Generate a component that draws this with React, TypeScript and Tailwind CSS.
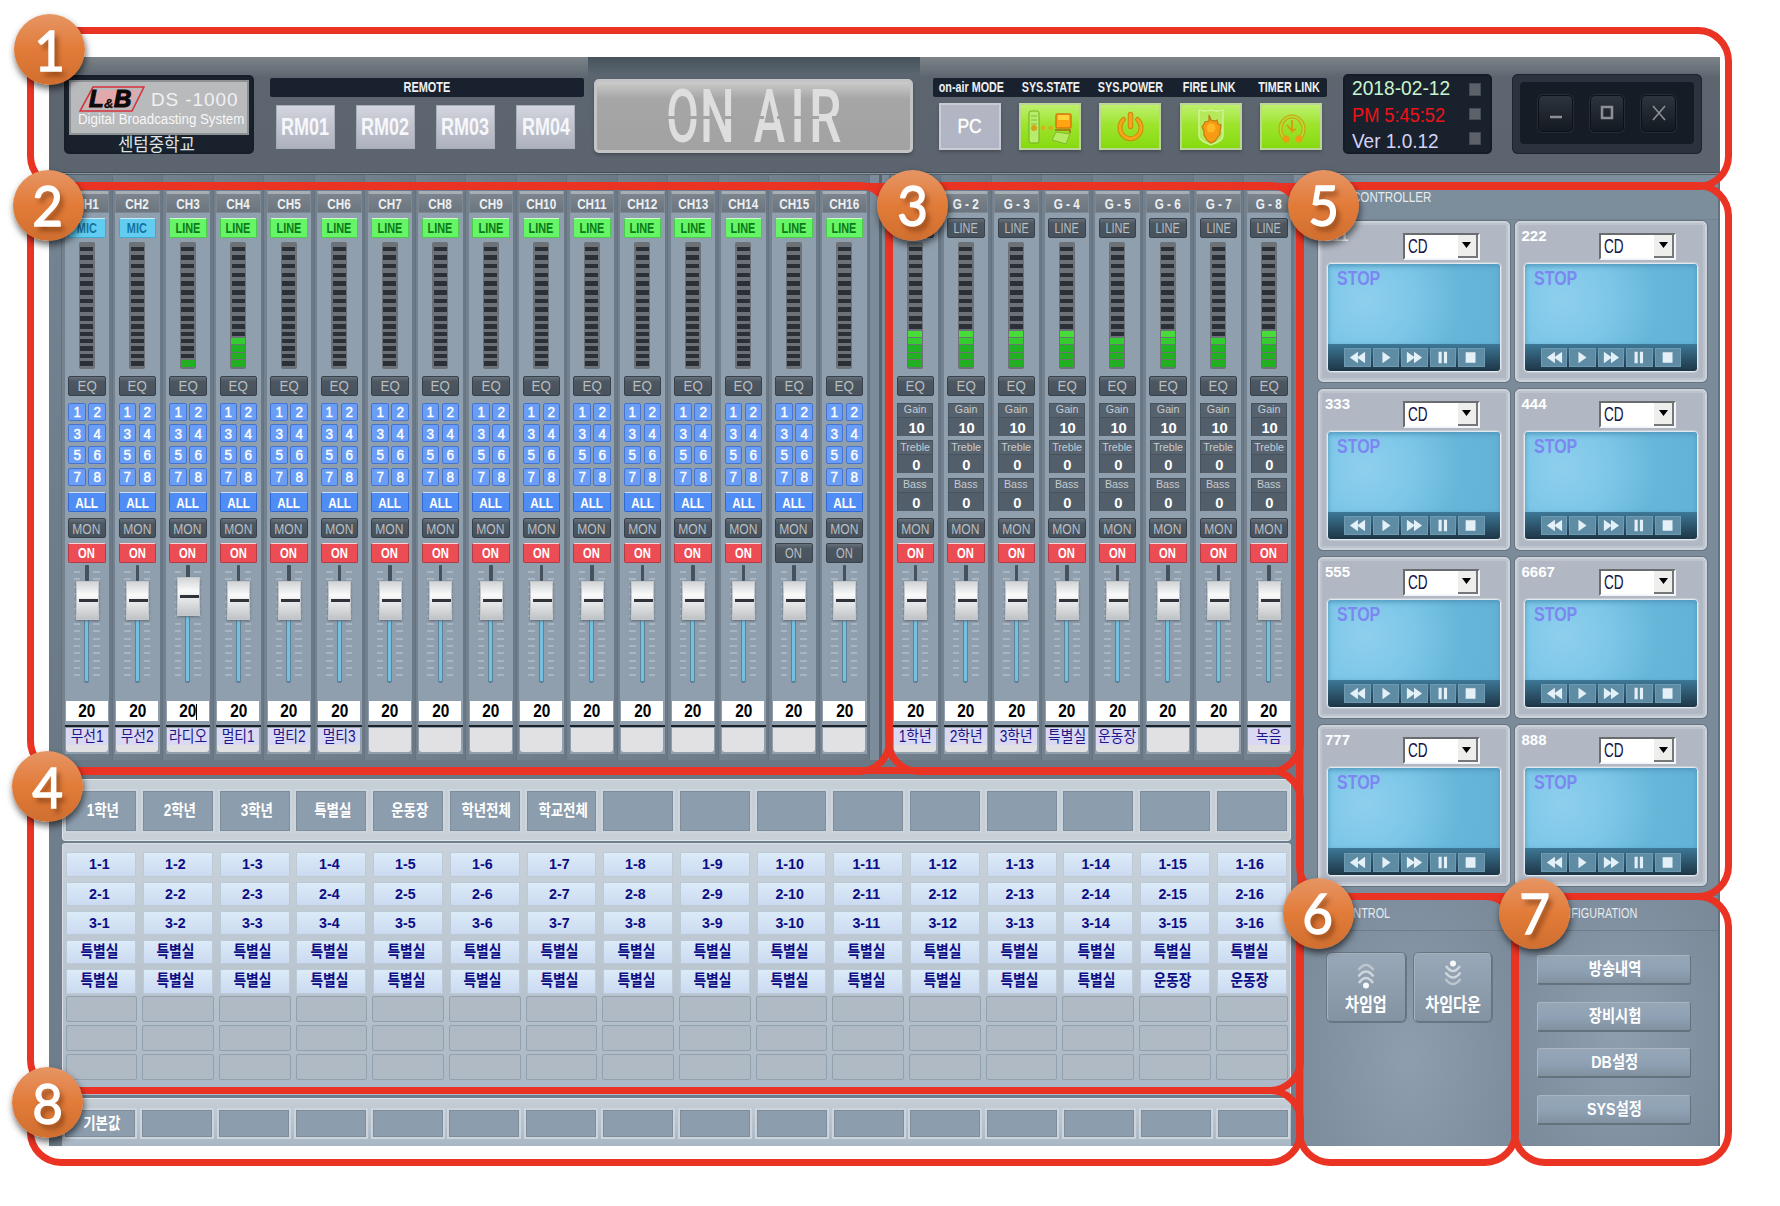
import React from "react";

const times = (n: number) => Array.from({ length: n }, (_, i) => i);

function T({ children, className = "" }: { children: React.ReactNode; className?: string }) {
  return <span className={`block whitespace-nowrap leading-none ${className}`}>{children}</span>;
}

/* ---------- header ---------- */

function Logo() {
  return (
    <div className="mt-[18px] ml-[15px] h-[79px] w-[190px] shrink-0 rounded-[5px] border-2 border-[#161e28] bg-[#18212c] px-[3px] pt-[3px]">
      <div className="h-[55px] border-2 border-[#8e9194] bg-[#b9babc] px-[8px] pt-[4px]">
        <div className="flex items-center">
          <svg width="66" height="26" viewBox="0 0 66 26">
            <polygon points="14,1 65,1 53,25 1,25" fill="#b9babc" stroke="#d8323c" strokeWidth="1.6" />
            <polygon points="16,4 60,4 50,22 6,22" fill="#e2a9ad" />
            <g fontFamily="Liberation Sans" fontWeight="bold" fontStyle="italic" fill="#0b0b0b" stroke="#0b0b0b">
              <text x="10" y="21" fontSize="24" strokeWidth="1.2" textLength="17">L</text>
              <text x="25" y="22" fontSize="13" strokeWidth="0.3">&amp;</text>
              <text x="35" y="21" fontSize="24" strokeWidth="1.2" textLength="19">B</text>
            </g>
          </svg>
          <T className="ml-[6px] text-[19px] tracking-[0.9px] text-[#f0f1f3]">DS -1000</T>
        </div>
        <T className="-ml-[1px] origin-left scale-x-[.95] text-[14px] text-[#f6f7f8]">Digital Broadcasting System</T>
      </div>
      <div className="flex h-[19px] items-center justify-center pr-[5px]">
        <T className="scale-x-[.93] text-[18px] text-[#dfe3e6]">센텀중학교</T>
      </div>
    </div>
  );
}

function Remote() {
  return (
    <div className="mt-[21px] ml-[16px] w-[314px] shrink-0">
      <div className="flex h-[19px] items-center justify-center rounded-[2px] bg-[#18212d] pb-[2px]">
        <T className="scale-x-[.78] text-[14px] font-bold text-[#eef0f2]">REMOTE</T>
      </div>
      <div className="mt-[8px] ml-[5.5px] flex gap-[21.2px]">
        {["RM01", "RM02", "RM03", "RM04"].map((r) => (
          <div key={r} className="flex h-[44px] w-[59px] shrink-0 items-center justify-center border border-[#a9adb8] bg-linear-to-b from-[#d3d5de] via-[#bfc2cd] to-[#adb1be] pb-px">
            <T className="scale-x-[.75] text-[24px] font-bold text-[#f6f7fa]">{r}</T>
          </div>
        ))}
      </div>
    </div>
  );
}

function LedLetter({ ch, w, scale, single }: { ch: string; w: string; scale: string; single?: boolean }) {
  return (
    <span className={`relative flex justify-center ${w}`}>
      <span className={`block text-[74px] leading-none font-medium ${scale}`}>{ch}</span>
      {single ? (
        <i className="absolute top-[36px] left-[2px] h-[3px] w-[10px] bg-[#a4a4a4]" />
      ) : (
        <>
          <i className="absolute top-[36px] -left-[2px] h-[3px] w-[10px] bg-[#a4a4a4]" />
          <i className="absolute top-[36px] -right-[2px] h-[3px] w-[10px] bg-[#a4a4a4]" />
        </>
      )}
    </span>
  );
}

function OnAir() {
  return (
    <div className="ml-[4px] h-[114px] w-[332px] shrink-0 bg-linear-to-b from-[#46525c] via-[#5a6570] via-15% to-[#5c646f]">
      <div className="mt-[22px] ml-[6px] flex h-[74px] w-[319px] items-center justify-center rounded-[5px] border-[3px] border-[#c2c4c6] bg-linear-to-b from-[#cbcbca] from-0% via-[#a6a6a6] via-25% to-[#a2a2a2] shadow-[0_2px_3px_#454c55]">
        <div className="flex items-center gap-[6px] pt-[2px] text-[#dedede]" style={{ fontFamily: "Roboto" }}>
          <LedLetter ch="O" w="w-[29px]" scale="scale-x-[.64]" />
          <LedLetter ch="N" w="w-[29px]" scale="scale-x-[.66]" />
          <span className="w-[12px]" />
          <LedLetter ch="A" w="w-[29px]" scale="scale-x-[.64]" />
          <LedLetter ch="I" w="w-[14px]" scale="scale-x-[.7]" single />
          <LedLetter ch="R" w="w-[29px]" scale="scale-x-[.7]" />
        </div>
      </div>
    </div>
  );
}

function StateIcon() {
  return (
    <svg width="58" height="44" viewBox="0 0 58 44">
      <rect x="8" y="6" width="10" height="32" rx="2" fill="#b9ec6c" stroke="#6fae20" />
      <path d="M10 11h6M10 15h6M10 19h6" stroke="#7fbf2a" />
      <circle cx="13" cy="23" r="3" fill="#d6a21c" />
      <circle cx="22" cy="23" r="2.200" fill="#d9b01c" />
      <circle cx="29.500" cy="23" r="2.200" fill="#d9b01c" />
      <rect x="35" y="9" width="15" height="14" rx="1.5" fill="#ffa313" stroke="#d67a0c" strokeWidth="1.5" />
      <rect x="37" y="10" width="11" height="5" fill="#ffd23c" />
      <path d="M35 27l14 2-4 10-14-4z" fill="#b6ea62" stroke="#7fb82c" />
      <path d="M34 25h15v3" stroke="#a56a10" strokeWidth="1.5" fill="none" />
    </svg>
  );
}
function PowerIcon() {
  return (
    <svg width="58" height="44" viewBox="0 0 58 44" fill="none" strokeLinecap="round">
      <path d="M22.500 14.500a10.500 11 0 1 0 14 0" stroke="#c98a0e" strokeWidth="5" />
      <path d="M29.500 9.500v12" stroke="#c98a0e" strokeWidth="5.500" />
      <path d="M22.500 14.500a10.500 11 0 1 0 14 0" stroke="#f3a616" strokeWidth="3" />
      <path d="M29.500 9.500v12" stroke="#f8a41b" strokeWidth="3.500" />
    </svg>
  );
}
function FireIcon() {
  return (
    <svg width="58" height="44" viewBox="0 0 58 44">
      <path d="M17 5q6 2 12 0 6 2 12 0v26q0 5-12 9-12-4-12-9z" fill="#b4e95e" stroke="#d3f59a" strokeWidth="1.3" />
      <path d="M27 10l2 5 4 1 2-1 1 4 3 1-1 6 0 3-2 3-3 4-4 2-4-3-3-5 0-4-2-4 2-3 1-2 4-1z" fill="#f99a13" stroke="#c07b0e" strokeWidth="1.200" />
      <circle cx="29" cy="23" r="4.500" fill="#ffb727" />
    </svg>
  );
}
function TimerIcon() {
  return (
    <svg width="58" height="44" viewBox="0 0 58 44" fill="none">
      <path d="M23 34a11.500 12.500 0 1 1 14 0" stroke="#cc9d12" strokeWidth="4" />
      <path d="M23 34a11.500 12.500 0 1 1 14 0" stroke="#b6dc2e" strokeWidth="2" />
      <circle cx="24" cy="34" r="3.500" fill="#eb9d14" />
      <circle cx="37" cy="34" r="3.500" fill="#eb9d14" />
      <path d="M30 15v11l-5-6M30 26l4-2" stroke="#d9980f" strokeWidth="1.800" />
    </svg>
  );
}

function Status() {
  const items: [string, React.ReactNode][] = [
    ["on-air MODE", null],
    ["SYS.STATE", <StateIcon key="s" />],
    ["SYS.POWER", <PowerIcon key="p" />],
    ["FIRE LINK", <FireIcon key="f" />],
    ["TIMER LINK", <TimerIcon key="t" />],
  ];
  return (
    <div className="mt-[21px] ml-[13px] w-[394px] shrink-0">
      <div className="flex h-[19px] rounded-[2px] bg-[#18212d] pb-[2px]">
        {items.map(([l]) => (
          <div key={l} className="-mr-[0.5px] flex w-[80px] shrink-0 items-center justify-center pr-[4px]">
            <T className="scale-x-[.77] text-[14px] font-bold text-[#eef0f2]">{l}</T>
          </div>
        ))}
      </div>
      <div className="mt-[6px] ml-[6px] flex gap-[18.200px]">
        {items.map(([l, icon]) =>
          icon ? (
            <div key={l} className="flex h-[47px] w-[62px] shrink-0 items-center justify-center border-2 border-[#bcd59a] bg-linear-to-b from-[#bdf06a] via-[#9fe42c] via-45% to-[#86da0c] shadow-[0_2px_3px_#454c55]">
              {icon}
            </div>
          ) : (
            <div key={l} className="flex h-[47px] w-[62px] shrink-0 items-center justify-center border-2 border-[#c9ccd3] bg-linear-to-b from-[#b3b6c2] to-[#b0b5c6] pb-[2px] shadow-[0_2px_3px_#454c55]">
              <T className="scale-x-[.83] text-[21px] text-white [-webkit-text-stroke:0.4px_white]">PC</T>
            </div>
          ),
        )}
      </div>
    </div>
  );
}

function Clock() {
  return (
    <div className="mt-[17px] ml-[16px] flex h-[80px] w-[149px] shrink-0 justify-between rounded-[5px] border-2 border-[#141c26] bg-[#19212c] pt-[2px] pr-[9px] pl-[7px]">
      <div className="flex flex-col gap-[6.500px] text-[20px]">
        <T className="origin-left scale-x-[.96] text-[#c9f5cf]">2018-02-12</T>
        <T className="origin-left scale-x-[.91] text-[#ee1318]">PM 5:45:52</T>
        <T className="origin-left scale-x-[.95] text-[#d4d2f8]">Ver 1.0.12</T>
      </div>
      <div className="flex flex-col gap-[12px] pt-[5px]">
        {times(3).map((i) => (
          <div key={i} className="h-[12.500px] w-[12px] border border-[#444b54] bg-[#5d626a]" />
        ))}
      </div>
    </div>
  );
}

function WindowControls() {
  const icons = [
    <path key="a" d="M4 14h12" />,
    <rect key="b" x="5" y="4" width="10" height="11" />,
    <path key="c" d="M4 3l12 14M16 3L4 17" strokeWidth="1.600" />,
  ];
  return (
    <div className="mt-[17px] ml-[20px] h-[80px] w-[190px] shrink-0 rounded-[6px] bg-[#2b333e] p-[8px] shadow-[inset_0_0_0_1px_#1c242e]">
      <div className="flex h-[62px] items-center justify-center gap-[17px] rounded-[4px] bg-[#151c25]">
        {icons.map((ic, i) => (
          <div key={i} className="flex h-[37px] w-[34.500px] items-center justify-center rounded-[5px] border border-[#0c1118] bg-linear-to-b from-[#2c343d] to-[#141a21] shadow-[0_0_0_1px_#252d37]">
            <svg width="20" height="20" viewBox="0 0 20 20" fill="none" stroke="#8d9094" strokeWidth="2.500">{ic}</svg>
          </div>
        ))}
      </div>
    </div>
  );
}

/* ---------- mixer ---------- */

function Key({ children, tone }: { children: React.ReactNode; tone: string }) {
  return (
    <div className={`mx-auto flex h-[20px] w-[37.500px] items-center justify-center overflow-hidden rounded-[2px] border ${tone}`}>
      {children}
    </div>
  );
}
const DARK = "border-[#39424c] bg-linear-to-b from-[#67717c] via-[#4d5761] via-25% to-[#48525c] text-[#b9bec3]";
const GREEN = "border-[#4cc84c] border-t-[#d3fbd0] bg-[#66f566] text-[#0c7a1a]";
const CYAN = "border-[#3fa8d0] border-t-[#c5eefa] bg-[#62cdf0] text-[#1474a0]";
const RED = "border-[#b03c46] border-t-[#fbd0d2] bg-[#ec4c54] text-white";
const BLUE = "border-[#2f68d0] border-t-[#cfe0ff] bg-[#4f8df4] text-white";
const LIT = ["bg-[#22b022]", "bg-[#22b022]", "bg-[#20b424]", "bg-[#35cc30]", "bg-[#48dc3a]"];

function Meter({ level }: { level: number }) {
  return (
    <div className="mx-auto h-[127px] w-[16px] rounded-[2px] bg-[#6c7277] pt-[3px]">
      {times(15).map((i) => {
        const fromBottom = 14 - i;
        const lit = fromBottom < level;
        return (
          <div key={i} className={`flex items-center justify-center ${i < 9 ? "h-[8.700px]" : "h-[7.400px]"}`}>
            <div className={lit ? `h-[6.500px] w-[14px] ${LIT[Math.min(4, fromBottom)]}` : "h-[4.500px] w-[13px] bg-[#2b3036]"} />
          </div>
        );
      })}
    </div>
  );
}

function Fader({ raised }: { raised?: boolean }) {
  return (
    <div className="relative mx-auto h-[122px] w-[26px]">
      <div className="mx-auto h-[16px] w-[3.500px] rounded-[1px] bg-[#45525e]" />
      <div className="mx-auto h-[102px] w-[5px] rounded-b-[2px] border-x border-b-2 border-[#5d8197] bg-[#74c0e0]" />
      <div className="absolute inset-x-0 top-[6px] flex flex-col gap-[5.400px]">
        {times(15).map((i) => (
          <div key={i} className="flex justify-between">
            <i className="h-[2px] w-[6.500px] bg-[#a9b6c1]" />
            <i className="h-[2px] w-[6.500px] bg-[#a9b6c1]" />
          </div>
        ))}
      </div>
      <div className={`absolute left-[2px] flex h-[39px] w-[23px] items-center justify-end border border-[#c4c7ca] bg-linear-to-b from-[#d2d4d6] via-[#fafafa] via-35% to-[#c0c3c6] shadow-[0_1px_2px_#5d6a76] ${raised ? "top-[12px]" : "top-[16px]"}`}>
        <i className="h-[2.500px] w-[19px] bg-[#30343a]" />
      </div>
    </div>
  );
}

function Param({ name, value }: { name: string; value: string }) {
  return (
    <div className="mx-auto h-[33px] w-[36px] border border-[#46525d] bg-[#56626e]">
      <div className="flex h-[14px] items-center justify-center border-b border-[#46525d]">
        <T className="scale-x-[.93] text-[11.500px] text-[#c6ccd1]">{name}</T>
      </div>
      <div className="flex h-[18px] items-center justify-center bg-[#525e6a] pt-[2px] pl-[2px]">
        <T className="scale-x-[.95] text-[15.500px] font-bold text-white">{value}</T>
      </div>
    </div>
  );
}

interface StripProps {
  title: string;
  source: string;
  tone: string;
  level: number;
  on: boolean;
  label: string;
  group?: boolean;
  active?: boolean;
}

function Strip({ title, source, tone, level, on, label, group, active }: StripProps) {
  const bold = tone === DARK ? "" : "font-semibold";
  return (
    <div className="h-[585px] w-[50.500px] shrink-0 border-l border-[#647281] bg-linear-to-r from-[#74828f] to-[#6b7987] pt-[16px] text-[14px]">
      <div className="mx-auto h-[563px] w-[44.500px] bg-[#8f9fae]">
        <div className="flex h-[22px] items-center justify-center rounded-t-[3px] border border-t-[3px] border-[#7f8890] border-t-[#a7aeb4] bg-linear-to-b from-[#7c858d] to-[#6b757f]">
          <T className="scale-x-[.78] text-[15px] font-bold text-[#eceff1]">{title}</T>
        </div>
        <div className="h-[4.500px]" />
        <Key tone={tone}><T className={`scale-x-[.78] ${bold}`}>{source}</T></Key>
        <div className="h-[4px]" />
        <Meter level={level} />
        <div className="h-[7px]" />
        <Key tone={DARK}><T className="scale-x-[.95]">EQ</T></Key>
        <div className="h-[7px]" />
        <div className="h-[89.500px]">
          {group ? (
            <div className="flex h-[108px] flex-col gap-[4.500px]">
              <Param name="Gain" value="10" />
              <Param name="Treble" value="0" />
              <Param name="Bass" value="0" />
            </div>
          ) : (
            <div className="mx-auto grid w-[37.500px] grid-cols-2 gap-x-[2.500px] gap-y-[3.700px]">
              {times(8).map((n) => (
                <div key={n} className="flex h-[18px] items-center justify-center rounded-[2px] border border-[#4474cf] bg-[#6a9df5]">
                  <T className="scale-x-90 text-[15px] text-white [-webkit-text-stroke:0.4px_white]">{n + 1}</T>
                </div>
              ))}
            </div>
          )}
        </div>
        <div className="h-[20px]">{!group && <Key tone={BLUE}><T className="scale-x-[.84] pt-px font-semibold">ALL</T></Key>}</div>
        <div className="h-[6px]" />
        <Key tone={DARK}><T className="scale-x-[.86] pt-px">MON</T></Key>
        <div className="h-[4.500px]" />
        <Key tone={on ? RED : DARK}><T className={`scale-x-[.8] ${on ? "font-bold" : ""}`}>ON</T></Key>
        <div className="h-[2.500px]" />
        <Fader raised={active} />
        <div className="h-[13.500px]" />
        <div className="mx-auto flex h-[20px] w-[42px] items-center justify-center bg-white pt-[2px]">
          <T className="scale-x-[.88] text-[17.500px] font-bold text-black">20</T>
          {active && <i className="-ml-px h-[16px] w-px bg-black" />}
        </div>
        <div className="h-[4px]" />
        <div className="h-[2.500px] bg-[#1b2129]" />
        <div className="mx-auto mt-px h-[24px] w-[42px] rounded-b-[3px] bg-[#e1e1e3]">
          {label && (
            <div className="flex h-[17px] items-center justify-center bg-[#dad9f3] pt-px">
              <T className="scale-x-[.86] text-[16px] text-[#1d1487]">{label}</T>
            </div>
          )}
        </div>
      </div>
    </div>
  );
}

function Mixer() {
  const chLabels = ["무선1", "무선2", "라디오", "멀티1", "멀티2", "멀티3"];
  const chLevels: Record<number, number> = { 2: 1, 3: 4 };
  const gLabels = ["1학년", "2학년", "3학년", "특별실", "운동장", "", "", "녹음"];
  const gLevels = [5, 5, 5, 5, 4, 5, 4, 5];
  return (
    <div className="flex h-[604px] bg-linear-to-b from-[#7f909f] via-[#748492] via-3% to-[#6a7885] pl-[12px]">
      {times(16).map((i) => (
        <Strip
          key={i}
          title={`CH${i + 1}`}
          source={i < 2 ? "MIC" : "LINE"}
          tone={i < 2 ? CYAN : GREEN}
          level={chLevels[i] ?? 0}
          on={i < 14}
          label={chLabels[i] ?? ""}
          active={i === 2}
        />
      ))}
      <div className="flex h-[585px] w-[20.500px] shrink-0 border-x border-[#647281] bg-[#7d8c9a]">
        <div className="ml-[9px] w-[3px] bg-[#56646f]" />
      </div>
      {times(8).map((i) => (
        <Strip
          key={i}
          title={i === 0 ? "" : `G - ${i + 1}`}
          source={i === 0 ? "" : "LINE"}
          tone={DARK}
          level={gLevels[i]}
          on
          label={gLabels[i]}
          group
        />
      ))}
    </div>
  );
}

/* ---------- zones ---------- */

const PRESETS = ["1학년", "2학년", "3학년", "특별실", "운동장", "학년전체", "학교전체"];

function Preset({ label, h }: { label: string; h: string }) {
  return (
    <div className={`mx-[3.400px] flex items-center justify-center border border-[#7e8d9b] bg-[#8c9dae] shadow-[0_0_0_2px_#ccd5dd] ${h}`}>
      <T className="scale-x-[.84] pl-[4px] text-[16px] font-bold text-white">{label}</T>
    </div>
  );
}

function Zones() {
  return (
    <div className="flex grow flex-col bg-[#6f7e8c] pr-[13px] pl-[13px]">
      <div className="grid h-[62px] w-[1229px] shrink-0 grid-cols-16 rounded-[3px] border border-[#e0e5e9] bg-linear-to-b from-[#c6ced6] to-[#c9d0d6] pt-[11px]">
        {times(16).map((i) => <Preset key={i} label={PRESETS[i] ?? ""} h="h-[39.500px]" />)}
      </div>
      <div className="mt-[2px] h-[252px] w-[1229px] shrink-0 rounded-t-[3px] border border-b-0 border-[#d8dee3] bg-linear-to-b from-[#c9d2da] to-[#abb8c5] pt-[6px]">
        {times(8).map((r) => (
          <div key={r} className={`grid h-[29.200px] grid-cols-16 ${r < 5 ? "items-center" : "items-start"}`}>
            {times(16).map((c) =>
              r < 5 ? (
                <div key={c} className="mx-[3.400px] flex h-[24.500px] items-center justify-center border border-[#bccad8] bg-linear-to-b from-[#dcebf8] to-[#cbdaf0]">
                  <T className={`pr-[5px] font-bold text-[#0c0c84] ${r < 3 ? "scale-x-[.92] pb-px text-[15.500px]" : "scale-x-[.86] text-[16px]"}`}>
                    {r < 3 ? `${r + 1}-${c + 1}` : r === 4 && c > 13 ? "운동장" : "특별실"}
                  </T>
                </div>
              ) : (
                <div key={c} className="mx-[2.500px] h-[26px] rounded-[2px] border-[1.500px] border-[#92a1ae] bg-[#b0bac5]" />
              ),
            )}
          </div>
        ))}
      </div>
      <div className="mt-[3px] grid w-[1229px] grow grid-cols-16 rounded-t-[3px] border-t border-[#e0e5e9] bg-linear-to-b from-[#c6ced6] to-[#a9b7c4] pt-[11px]">
        {times(16).map((i) => <Preset key={i} label={i === 0 ? "기본값" : ""} h="h-[27px]" />)}
      </div>
    </div>
  );
}

/* ---------- right column ---------- */

function Transport() {
  const g = [
    <path key="0" d="M14 3v13L5 9.500zM22 3v13l-9-6.500z" />,
    <path key="1" d="M9 3l9 6.500L9 16z" />,
    <path key="2" d="M5 3l9 6.500L5 16zM13 3l9 6.500-9 6.500z" />,
    <path key="3" d="M8 3h3.500v13H8zM14 3h3.500v13H14z" />,
    <path key="4" d="M7 3.500h11v12H7z" />,
  ];
  return (
    <div className="flex h-[28px] items-center gap-[2px] bg-linear-to-b from-[#3c7897] to-[#1d3444] pl-[16px]">
      {g.map((p, i) => (
        <svg key={i} width="26.500" height="19" viewBox="0 0 26.500 19" className="border border-[#6e9bb2] bg-[#5e8ca5]" fill="#e4f0f7">{p}</svg>
      ))}
    </div>
  );
}

function Deck({ name }: { name: string }) {
  return (
    <div className="h-[161px] w-[192px] rounded-[5px] border-2 border-[#cbd2da] bg-[#b1b8c3] shadow-[inset_0_0_0_2px_#bdc4cd,0_0_0_1px_#66747f]">
      <div className="flex h-[40px] pt-[5px]">
        <T className="w-[82.500px] pl-[5px] text-[15px] font-bold text-white">{name}</T>
        <div className="mt-[5px] flex h-[27px] w-[77px] justify-between border-2 border-[#f4f5f6] border-t-[#6a6d70] border-l-[#6a6d70] bg-white pl-[3px]">
          <T className="mt-px origin-left scale-x-[.68] text-[20px] text-[#14124a]">CD</T>
          <div className="flex h-full w-[20px] items-center justify-center border-r-2 border-b-2 border-[#75777a] bg-[#eeeeec]">
            <svg width="9" height="6" viewBox="0 0 9 6"><path d="M0 0h9L4.500 6z" fill="#000" /></svg>
          </div>
        </div>
      </div>
      <div className="ml-[7px] h-[109px] w-[174px] overflow-hidden rounded-[4px] border border-[#e2eaf0] shadow-[0_0_0_1px_#c4cbd3]">
        <div className="h-[80px] bg-[radial-gradient(circle_at_22%_45%,#8fcfed_0,#7cc6e8_50px,#66b6d9_95px,#62b1d5_150px)] pt-[4px] pl-[9px] shadow-[inset_0_2px_5px_#4f97bc]">
          <T className="origin-left scale-x-[.8] text-[20px] font-bold text-[#7b88f0]">STOP</T>
        </div>
        <Transport />
      </div>
    </div>
  );
}

function Chime({ label, down, scale }: { label: string; down?: boolean; scale: string }) {
  return (
    <div className="flex h-[69px] w-[78.500px] flex-col items-center rounded-[5px] border border-[#a5b2be] border-r-[#65737f] border-b-[#65737f] bg-linear-to-b from-[#98a8b8] to-[#8493a2] pt-[5px] shadow-[0_0_0_1px_#697783]">
      <svg width="20" height="31" viewBox="0 0 20 31" className={down ? "rotate-180" : ""} fill="none" stroke="#cfd6dc" strokeWidth="2.400">
        <path d="M3 24q7-10 14 0" />
        <path d="M2.500 17.500q7.500-10 15 0" />
        <path d="M2.500 11q7.500-10 15 0" stroke="#bcc6ce" />
        <circle cx="10" cy="26.500" r="3" fill="#f8f9fa" stroke="none" />
      </svg>
      <T className={`mt-[6px] text-[18px] font-bold text-white ${scale}`}>{label}</T>
    </div>
  );
}

function RightColumn() {
  return (
    <div className="flex w-[416px] shrink-0 flex-col border-r-2 border-[#65727f] bg-[#7b8b9a]">
      <div className="h-[721px] border-b border-[#66747f]">
        <div className="flex h-[44.500px] items-center border-b border-[#728291] bg-[#7c8d9c] pl-[28px]">
          <T className="origin-left scale-x-[.8] text-[14.500px] text-[#e6ebef]">CD CONTROLLER</T>
        </div>
        <div className="ml-[14px] grid w-[392px] grid-cols-[192px_192px] gap-x-[4.500px] gap-y-[7.200px] pt-[1px]">
          {["111", "222", "333", "444", "555", "6667", "777", "888"].map((n) => <Deck key={n} name={n} />)}
        </div>
      </div>
      <div className="flex grow">
        <div className="w-[211px] border-r-2 border-[#5f6d7a] bg-[radial-gradient(ellipse_at_50%_65%,#8e9eae_0%,#8090a0_60%,#788897_100%)]">
          <div className="flex h-[35px] items-center border-b border-[#6d7c8a] pl-[33px]">
            <T className="origin-left scale-x-[.75] text-[14.500px] text-[#e6ebef]">CONTROL</T>
          </div>
          <div className="mt-[22px] ml-[23px] flex gap-[8px]">
            <Chime label="차임업" scale="scale-x-[.84]" />
            <Chime label="차임다운" down scale="scale-x-[.84]" />
          </div>
        </div>
        <div className="grow bg-[radial-gradient(ellipse_at_50%_55%,#8e9eae_0%,#8090a0_60%,#788897_100%)]">
          <div className="flex h-[35px] items-center border-b border-[#6d7c8a] pl-[32px]">
            <T className="origin-left scale-x-[.75] text-[14.500px] text-[#e6ebef]">CONFIGURATION</T>
          </div>
          <div className="mt-[24px] ml-[22px] flex w-[154px] flex-col gap-[16.700px]">
            {["방송내역", "장비시험", "DB설정", "SYS설정"].map((l) => (
              <div key={l} className="flex h-[30px] items-center justify-center rounded-[3px] border border-[#a9b5c0] border-r-[#64727e] border-b-2 border-b-[#64727e] bg-linear-to-b from-[#96a6b6] via-[#8fa2b5] to-[#8291a0]">
                <T className="scale-x-[.84] pl-[2px] text-[17px] font-bold text-white">{l}</T>
              </div>
            ))}
          </div>
        </div>
      </div>
    </div>
  );
}

/* ---------- callouts ---------- */

const FRAMES = [
  "left-[27px] top-[27px] w-[1705px] h-[163px]",
  "left-[27px] top-[182px] w-[866px] h-[593px]",
  "left-[885px] top-[182px] w-[419px] h-[593px]",
  "left-[27px] top-[767px] w-[1277px] h-[327px]",
  "left-[1296px] top-[182px] w-[436px] h-[718px]",
  "left-[1296px] top-[893px] w-[223px] h-[273px]",
  "left-[1511px] top-[893px] w-[221px] h-[273px]",
  "left-[27px] top-[1087px] w-[1277px] h-[79px]",
];
const BADGES = [
  "left-[14px] top-[14px]",
  "left-[12.500px] top-[169.500px]",
  "left-[877px] top-[169.500px]",
  "left-[12px] top-[751px]",
  "left-[1288px] top-[169.500px]",
  "left-[1282.500px] top-[877.500px]",
  "left-[1499px] top-[877.500px]",
  "left-[12px] top-[1067px]",
];

export default function App() {
  return (
    <div className="relative h-[1206px] w-[1780px] overflow-hidden bg-white pt-[57px] pl-[49px]" style={{ fontFamily: '"Liberation Sans","Noto Sans CJK KR",sans-serif' }}>
      <div className="flex h-[1089px] w-[1671px] flex-col overflow-hidden">
        <header className="flex h-[115px] shrink-0 items-start bg-linear-to-b from-[#7c8388] via-[#5d656f] via-18% to-[#5c646f]">
          <Logo />
          <Remote />
          <OnAir />
          <Status />
          <Clock />
          <WindowControls />
        </header>
        <div className="h-[3px] shrink-0 border-y border-t-[#454d56] border-b-[#525d68] bg-[#8b969f]" />
        <main className="flex grow">
          <div className="flex w-[1255px] shrink-0 flex-col">
            <Mixer />
            <Zones />
          </div>
          <RightColumn />
        </main>
      </div>
      {FRAMES.map((f) => (
        <div key={f} className={`pointer-events-none absolute rounded-[34px] border-[7.500px] border-[#ea3323] ${f}`} />
      ))}
      {BADGES.map((b, i) => (
        <div key={b} className={`absolute flex size-[71px] items-center justify-center rounded-full bg-linear-to-b from-[#e69563] via-[#e27b38] via-50% to-[#d06f30] shadow-[1px_4px_7px_rgba(0,0,0,0.6)] ${b}`} style={{ fontFamily: "Lato" }}>
          <T className="scale-x-[.93] pb-px text-[57px] text-white [-webkit-text-stroke:1.4px_white] [text-shadow:4px_5px_6px_rgba(80,30,0,0.5)]">{i + 1}</T>
        </div>
      ))}
    </div>
  );
}
